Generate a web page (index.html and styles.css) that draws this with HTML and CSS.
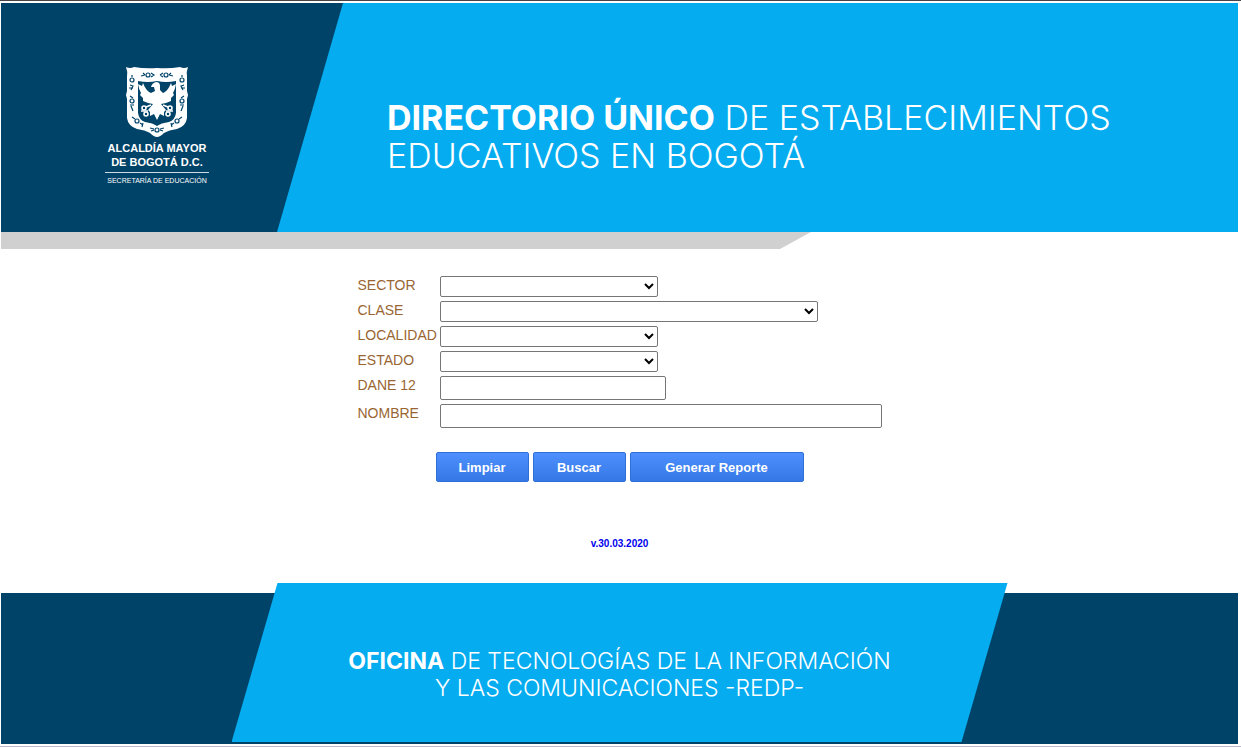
FILE: index.html
```html
<!DOCTYPE html>
<html lang="es">
<head>
<meta charset="utf-8">
<title>Directorio Único de Establecimientos Educativos en Bogotá</title>
<link rel="stylesheet" href="styles.css">
</head>
<body>
<div class="page">
  <header class="banner">
    <div class="brand">
      <div class="brand-block">
        <svg class="shield" viewBox="0 0 62 70" aria-hidden="true">
          <path fill="#fff" d="M0 0Q4 2 8 0Q19 2 31 1Q43 2 54 0Q58 2 62 0Q60 5 61 10V24L62 28L61 32V51Q60 59 51 62Q43 63 38 66Q34 70 31 70Q28 70 24 66Q19 63 11 62Q2 59 1 51V32L0 28L1 24V10Q2 5 0 0Z"/>
          <path fill="#004368" d="M12 14Q22 16 31 14Q40 16 50 14V46Q49 53 43 55Q35 56 31 59Q27 56 19 55Q13 53 12 46Z"/>
          <g fill="none" stroke="#004368" stroke-width="1.2">
            <path d="M15 9l4-1M17 6l2 2M25 6l3 2-3 2M34 8l3-2M34 8l3 2M43 8l4 1M43 8l2-2"/>
            <circle cx="22" cy="8" r="2"/><circle cx="40" cy="8" r="2"/>
            <circle cx="6" cy="13" r="2"/><path d="M6 8v2M4 18l3 1-2 4M3 21h4"/>
            <circle cx="6" cy="34" r="2"/><path d="M4 29l3 2M4 38h4M5 39l2 5"/>
            <circle cx="56" cy="13" r="2"/><path d="M56 8v2M58 18l-3 1 2 4M55 21h4"/>
            <circle cx="56" cy="34" r="2"/><path d="M58 29l-3 2M54 38h4M57 39l-2 5"/>
            <circle cx="11" cy="54" r="2"/><path d="M6 50l3 2M14 56l3 2M17 56l-1 4"/>
            <circle cx="51" cy="54" r="2"/><path d="M56 50l-3 2M48 56l-3 2M45 56l1 4"/>
            <circle cx="31" cy="63" r="2"/><path d="M24 61l4 1M25 64l3-1M38 61l-4 1M37 64l-3-1"/>
          </g>
          <path fill="#fff" d="M30 15Q34 15 34 19L34 23L37 26Q42 24 45 16L46 19L50 17Q49 23 47 26L48 28L45 31L45 34L40 36L35 37L40 43L38 45L38 49L34 47L31 53L28 47L24 49L24 45L22 43L27 37L22 36L17 34L17 31L14 28L15 26Q13 23 12 17L16 19L17 16Q20 24 25 26L29 24L28 20L25 20Q26 16 30 15Z"/>
          <g fill="none" stroke="#fff" stroke-width="1.6">
            <circle cx="18" cy="41" r="2"/><circle cx="44" cy="41" r="2"/>
            <circle cx="20" cy="47" r="2"/><circle cx="42" cy="47" r="2"/>
            <path d="M20 40l5-2M42 40l-5-2M15 44h7M40 44h7"/>
          </g>
        </svg>
        <p class="brand-name">ALCALDÍA MAYOR<br>DE BOGOTÁ D.C.</p>
        <p class="brand-unit">SECRETARÍA DE EDUCACIÓN</p>
      </div>
    </div>
    <h1 class="title"><strong>DIRECTORIO ÚNICO</strong> DE ESTABLECIMIENTOS<br>EDUCATIVOS EN BOGOTÁ</h1>
  </header>
  <div class="ribbon"></div>

  <main class="content">
    <form class="search">
      <div class="fields">
        <label for="sector">SECTOR</label>
        <select id="sector" class="field field-short"><option></option></select>
        <label for="clase">CLASE</label>
        <select id="clase" class="field field-medium"><option></option></select>
        <label for="localidad">LOCALIDAD</label>
        <select id="localidad" class="field field-short"><option></option></select>
        <label for="estado">ESTADO</label>
        <select id="estado" class="field field-short"><option></option></select>
        <label for="dane">DANE 12</label>
        <input id="dane" class="field field-code" type="text">
        <label for="nombre">NOMBRE</label>
        <input id="nombre" class="field field-full" type="text">
      </div>
      <div class="actions">
        <button class="button" type="reset">Limpiar</button>
        <button class="button" type="button">Buscar</button>
        <button class="button button-wide" type="button">Generar Reporte</button>
      </div>
    </form>
    <p class="version">v.30.03.2020</p>
  </main>

  <footer class="footer">
    <div class="footer-panel">
      <p class="footer-text"><strong>OFICINA</strong> DE TECNOLOGÍAS DE LA INFORMACIÓN<br>Y LAS COMUNICACIONES -REDP-</p>
    </div>
  </footer>
</div>
</body>
</html>
```
FILE: styles.css
```css
* {
  box-sizing: border-box;
}

body {
  margin: 0;
  background: #fff;
  font-family: "Liberation Sans", Arial, sans-serif;
}

.page {
  padding: 2px 3px 2px 1px;
  border-top: 1px solid #444449;
  border-bottom: 1px solid #b9b9cb;
}

.banner {
  display: flex;
  min-height: 229px;
  background: #05acef;
  color: #fff;
}

.brand {
  display: flex;
  flex: none;
  width: 342px;
  padding: 64px 0 0 104px;
  background: #004368;
  clip-path: polygon(0 0, 100% 0, calc(100% - 66px) 100%, 0 100%);
}

.brand-block {
  width: 104px;
  text-align: center;
  white-space: nowrap;
}

.shield {
  display: block;
  width: 62px;
  height: 70px;
  margin: 0 auto;
}

.brand-name {
  display: flow-root;
  margin: 4px 0 3px;
  font-size: 11px;
  font-weight: bold;
  line-height: 14px;
}

.brand-unit {
  margin: 0;
  padding-top: 4px;
  border-top: 1px solid #d0dce4;
  font-size: 7px;
  line-height: 8px;
}

.title {
  margin: 0;
  padding: 96px 0 0 44px;
  font-family: Inter, "Open Sans", sans-serif;
  font-size: 34px;
  font-weight: 300;
  line-height: 38px;
}

.title strong,
.footer-text strong {
  font-weight: 700;
}

.ribbon {
  width: 810px;
  max-width: 100%;
  height: 17px;
  background: #d0d0d0;
  clip-path: polygon(0 0, 100% 0, calc(100% - 31px) 100%, 0 100%);
}

.content {
  display: flex;
  flex-direction: column;
  align-items: center;
  padding-top: 27px;
}

.search {
  width: 524px;
  max-width: 100%;
}

.fields {
  display: grid;
  grid-template-columns: 78px 1fr;
  gap: 4px;
  align-items: start;
  color: #996633;
  font-size: 14px;
  line-height: 18px;
}

.field {
  height: 21px;
  margin: 0;
  border: 1px solid #767676;
  border-radius: 2px;
  background-color: #fff;
  color: #000;
  font-size: 13px;
}

select.field {
  padding-right: 3px;
}

.field-short {
  width: 218px;
}

.field-medium {
  width: 378px;
}

.field-code {
  width: 226px;
  height: 24px;
}

.field-full {
  width: 100%;
  height: 24px;
}

.actions {
  display: flex;
  justify-content: center;
  gap: 4px;
  margin-top: 24px;
}

.button {
  width: 93px;
  height: 30px;
  padding: 0;
  border: 1px solid #2f6fd8;
  border-radius: 2px;
  background: linear-gradient(#4d90fe, #3577e5);
  color: #fff;
  font-family: inherit;
  font-size: 13px;
  font-weight: bold;
}

.button-wide {
  width: 174px;
}

.version {
  margin: 56px 0 0;
  color: #0000ee;
  font-size: 10px;
  font-weight: bold;
  line-height: 12px;
}

.footer {
  display: flex;
  justify-content: center;
  margin-top: 33px;
  padding-bottom: 2px;
  background: linear-gradient(transparent 10px, #004368 10px);
}

.footer-panel {
  width: 776px;
  min-height: 159px;
  padding-top: 65px;
  background: #05acef;
  clip-path: polygon(46px 0, 100% 0, calc(100% - 46px) 100%, 0 100%);
}

.footer-text {
  margin: 0;
  color: #fff;
  font-family: Inter, "Open Sans", sans-serif;
  font-size: 23px;
  font-weight: 300;
  line-height: 27px;
  text-align: center;
}
```
